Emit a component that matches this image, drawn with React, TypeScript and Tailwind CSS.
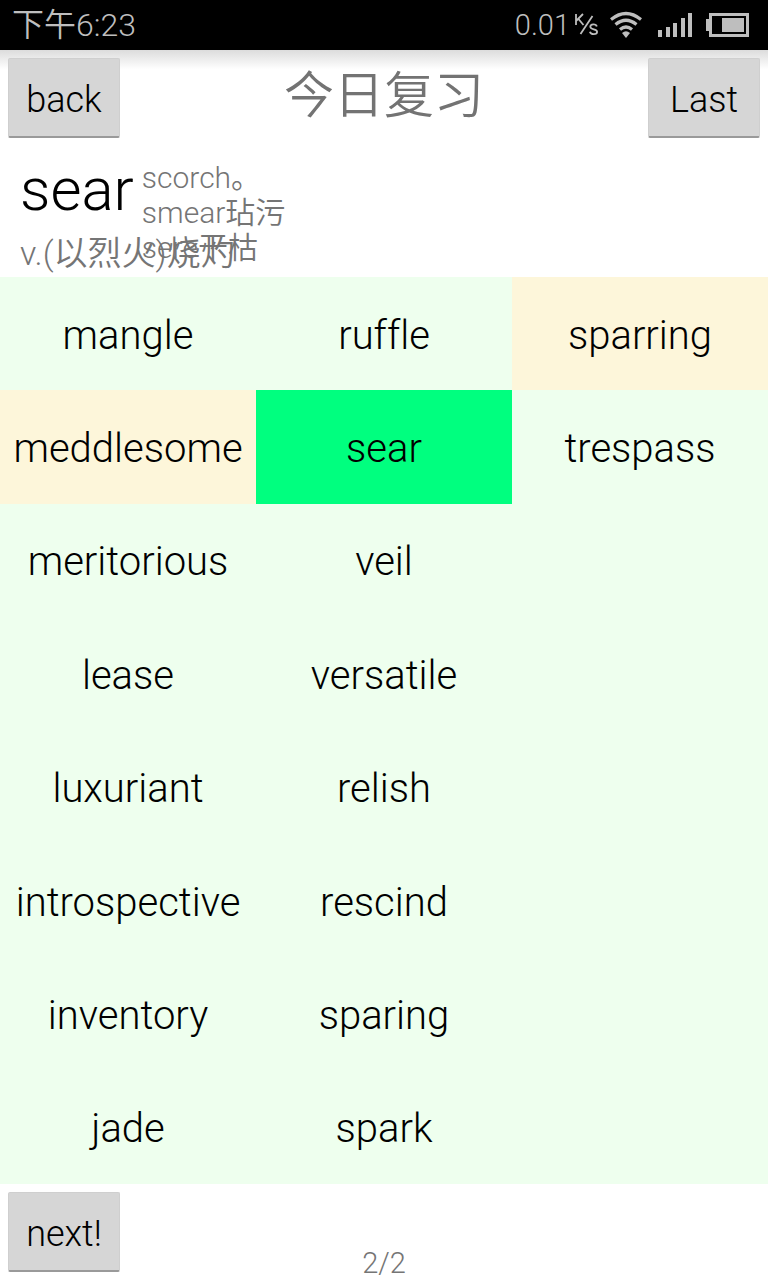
import React from "react";

type Tone = "plain" | "warm" | "active";
type Word = { text: string; tone?: Tone };

const words: Word[] = [
  { text: "mangle" }, { text: "ruffle" }, { text: "sparring", tone: "warm" },
  { text: "meddlesome", tone: "warm" }, { text: "sear", tone: "active" }, { text: "trespass" },
  { text: "meritorious" }, { text: "veil" }, { text: "" },
  { text: "lease" }, { text: "versatile" }, { text: "" },
  { text: "luxuriant" }, { text: "relish" }, { text: "" },
  { text: "introspective" }, { text: "rescind" }, { text: "" },
  { text: "inventory" }, { text: "sparing" }, { text: "" },
  { text: "jade" }, { text: "spark" }, { text: "" },
];

const tones: Record<Tone, string> = {
  plain: "bg-[#eeffee]",
  warm: "bg-[#fdf6da]",
  active: "bg-[#00ff7f]",
};

function NavButton({ children }: { children: string }) {
  return (
    <button className="flex h-20 w-28 items-center justify-center rounded-xs border border-b-2 border-[#cfcfcf] border-b-[#9a9a9a] bg-[#d6d6d6] pt-1 text-4xl font-light text-black">
      {children}
    </button>
  );
}

function Han({ children }: { children: string }) {
  return <span className="font-[350]">{children}</span>;
}

function SpeedUnit() {
  return (
    <svg className="ml-1 h-6 w-6" viewBox="0 0 24 24" fill="none" stroke="currentColor" strokeWidth="1.8" aria-label="K/s">
      <path d="M2 1v11M9 1L2 8M4.500 6l5 6M18.500 3L6.500 21M22.800 13.500c-.8-3-6.500-2.800-6.500.2 0 3.200 6.800 2 6.800 5 0 3.200-6.400 3.200-7.200 0" />
    </svg>
  );
}

function WifiIcon() {
  return (
    <svg className="ml-3 h-7 w-8" viewBox="0 0 32 28" fill="none" stroke="currentColor" strokeWidth="3.200" aria-label="Wi-Fi">
      <path d="M1 8.500Q16-3.500 31 8.500M5.500 13.500Q16 5 26.500 13.500M10 18.500Q16 13.500 22 18.500" />
      <path d="M16 27l-4-5q4-3.500 8 0z" fill="currentColor" stroke="none" />
    </svg>
  );
}

function SignalIcon() {
  return (
    <svg className="ml-4 h-6 w-[34px]" viewBox="0 0 34 24" fill="currentColor" aria-label="Signal">
      <path d="M0 17h4v7H0zM8 14h4v10H8zM15 10h4v14h-4zM23 5h4v19h-4zM30 0h4v24h-4z" />
    </svg>
  );
}

function BatteryIcon() {
  return (
    <svg className="ml-[14px] h-6 w-[43px]" viewBox="0 0 43 24" fill="currentColor" aria-label="Battery">
      <path fillRule="evenodd" d="M3 0h40v24H3v-6H0V6h3zM6 3v18h34V3z" />
      <path d="M16 5h22v14H16z" />
    </svg>
  );
}

function StatusBar() {
  return (
    <header className="flex h-[50px] items-center justify-between bg-black pr-[19px] pl-3 text-[#bebebe]">
      <span className="text-[32px] leading-none font-light">
        <Han>下午</Han>6:23
      </span>
      <div className="flex items-center">
        <span className="text-[29px] leading-none font-light">0.01</span>
        <SpeedUnit />
        <WifiIcon />
        <SignalIcon />
        <BatteryIcon />
      </div>
    </header>
  );
}

export default function App() {
  return (
    <main className="flex min-h-screen flex-col bg-white font-['Roboto','Noto_Sans_CJK_SC',sans-serif] [font-variant-ligatures:none]">
      <StatusBar />
      <div className="flex items-start justify-between bg-linear-to-b from-[#dcdcdc] to-white to-20% p-2">
        <NavButton>back</NavButton>
        <h1 className="text-[50px] leading-[76px] text-[#737373]">
          <Han>今日复习</Han>
        </h1>
        <NavButton>Last</NavButton>
      </div>
      <section className="relative h-[131px] px-5 pt-3 text-[#757575]">
        <div className="flex items-start gap-2">
          <h2 className="text-[60px] leading-[64px] font-light text-black">sear</h2>
          <p className="pt-[2px] text-[30px] leading-[35px] font-light">
            scorch<Han>。</Han>
            <br />
            smear<Han>玷污</Han>
            <br />
            sere<Han>干枯</Han>
          </p>
        </div>
        <p className="absolute bottom-[2px] left-5 text-[34px] leading-[44px] font-light">
          v.(<Han>以烈火</Han>)<Han>烧灼</Han>
        </p>
      </section>
      <div className="grid grow auto-rows-fr grid-cols-3">
        {words.map((w, i) =>
          w.text ? (
            <button key={i} className={`flex items-center justify-center pt-1 text-[40px] font-light text-black ${tones[w.tone ?? "plain"]}`}>
              {w.text}
            </button>
          ) : (
            <div key={i} className="bg-[#eeffee]" />
          ),
        )}
      </div>
      <footer className="grid grid-cols-3 items-end px-2 pt-2">
        <div className="pb-2">
          <NavButton>next!</NavButton>
        </div>
        <p className="pb-[2px] text-center text-[29px] leading-none font-light text-[#757575]">2/2</p>
      </footer>
    </main>
  );
}
